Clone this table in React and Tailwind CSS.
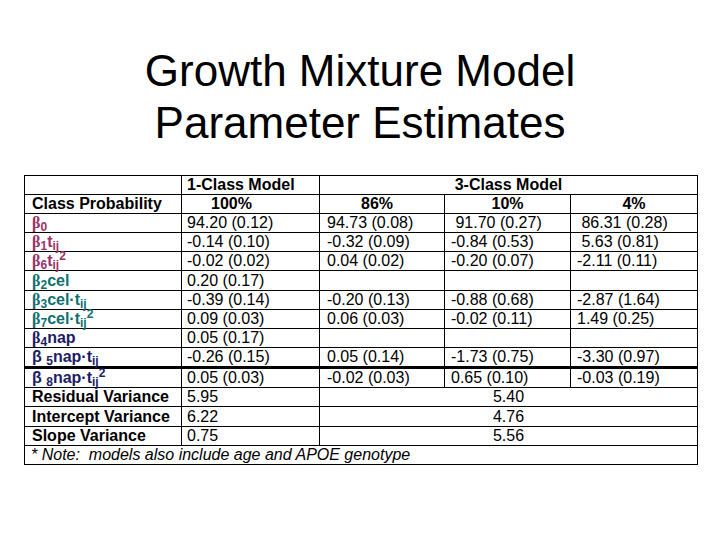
const PURPLE = "text-[#993366]";
const TEAL = "text-[#107070]";
const NAVY = "text-[#1c1c66]";

function Beta({ n, spaced }) {
  return (
    <>
      <span className={spaced ? "" : "font-['Liberation_Serif',serif]"}>β</span>
      {spaced ? " " : ""}
      <sub>{n}</sub>
    </>
  );
}

const Tij = ({ sq }) => (
  <>
    t<sub>ij</sub>
    {sq && <sup>2</sup>}
  </>
);

const rows = [
  { label: <><Beta n="0" /></>, color: PURPLE, v: ["94.20 (0.12)", "94.73 (0.08)", " 91.70 (0.27)", " 86.31 (0.28)"] },
  { label: <><Beta n="1" /><Tij /></>, color: PURPLE, v: ["-0.14 (0.10)", "-0.32 (0.09)", "-0.84 (0.53)", " 5.63 (0.81)"] },
  { label: <><Beta n="6" /><Tij sq /></>, color: PURPLE, v: ["-0.02 (0.02)", "0.04 (0.02)", "-0.20 (0.07)", "-2.11 (0.11)"] },
  { label: <><Beta n="2" />cel</>, color: TEAL, v: ["0.20 (0.17)", "", "", ""], tall: true },
  { label: <><Beta n="3" />cel·<Tij /></>, color: TEAL, v: ["-0.39 (0.14)", "-0.20 (0.13)", "-0.88 (0.68)", "-2.87 (1.64)"] },
  { label: <><Beta n="7" />cel·<Tij sq /></>, color: TEAL, v: ["0.09 (0.03)", "0.06 (0.03)", "-0.02 (0.11)", "1.49 (0.25)"] },
  { label: <><Beta n="4" />nap</>, color: NAVY, v: ["0.05 (0.17)", "", "", ""] },
  { label: <><Beta n="5" spaced />nap·<Tij /></>, color: NAVY, v: ["-0.26 (0.15)", "0.05 (0.14)", "-1.73 (0.75)", "-3.30 (0.97)"], thick: true },
  { label: <><Beta n="8" spaced />nap·<Tij sq /></>, color: NAVY, v: ["0.05 (0.03)", "-0.02 (0.03)", "0.65 (0.10)", "-0.03 (0.19)"], tall: true },
];

const variances = [
  ["Residual Variance", "5.95", "5.40"],
  ["Intercept Variance", "6.22", "4.76"],
  ["Slope Variance", "0.75", "5.56"],
];

const td = "border border-black p-0 align-middle whitespace-pre";

export default function App() {
  return (
    <div className="w-[720px] h-[540px] bg-white text-black font-['Liberation_Sans',Arial,sans-serif]">
      {/* Title */}
      <h1 className="pt-[45px] text-center text-[44px] leading-[52px] font-normal">
        Growth Mixture Model
        <br />
        Parameter Estimates
      </h1>

      {/* Table */}
      <div className="mt-[26px] pl-[24px]">
        <table className="table-fixed border-collapse w-[673px] text-[16px] leading-[18px]">
          <colgroup>
            <col className="w-[157px]" />
            <col className="w-[138px]" />
            <col className="w-[125px]" />
            <col className="w-[126px]" />
            <col className="w-[127px]" />
          </colgroup>
          <tbody>
            <tr className="h-[19px] font-bold">
              <td className={td}></td>
              <td className={`${td} pl-[5px]`}>1-Class Model</td>
              <td className={`${td} text-center`} colSpan={3}>3-Class Model</td>
            </tr>
            <tr className="h-[19px] font-bold">
              <td className={`${td} pl-[7px]`}>Class Probability</td>
              <td className={`${td} pl-[29px]`}>100%</td>
              <td className={`${td} text-center pr-[10px]`}>86%</td>
              <td className={`${td} text-center`}>10%</td>
              <td className={`${td} text-center`}>4%</td>
            </tr>
            {rows.map((r, i) => (
              <tr key={i} className={`${r.tall ? "h-[20px]" : "h-[19px]"} ${r.thick ? "border-b-[3px] border-black" : ""}`}>
                <td className={`${td} pl-[7px] font-bold ${r.color} ${r.thick ? "border-b-[3px]" : ""}`}>{r.label}</td>
                <td className={`${td} pl-[5px] ${r.thick ? "border-b-[3px]" : ""}`}>{r.v[0]}</td>
                <td className={`${td} pl-[7px] ${r.thick ? "border-b-[3px]" : ""}`}>{r.v[1]}</td>
                <td className={`${td} pl-[6px] ${r.thick ? "border-b-[3px]" : ""}`}>{r.v[2]}</td>
                <td className={`${td} pl-[6px] ${r.thick ? "border-b-[3px]" : ""}`}>{r.v[3]}</td>
              </tr>
            ))}
            {variances.map(([label, a, b], i) => (
              <tr key={label} className={i === 1 ? "h-[20px]" : "h-[19px]"}>
                <td className={`${td} pl-[7px] font-bold`}>{label}</td>
                <td className={`${td} pl-[5px]`}>{a}</td>
                <td className={`${td} text-center`} colSpan={3}>{b}</td>
              </tr>
            ))}
            <tr className="h-[19px]">
              <td className={`${td} pl-[6px] italic`} colSpan={5}>{"* Note:  models also include age and APOE genotype"}</td>
            </tr>
          </tbody>
        </table>
      </div>
    </div>
  );
}
